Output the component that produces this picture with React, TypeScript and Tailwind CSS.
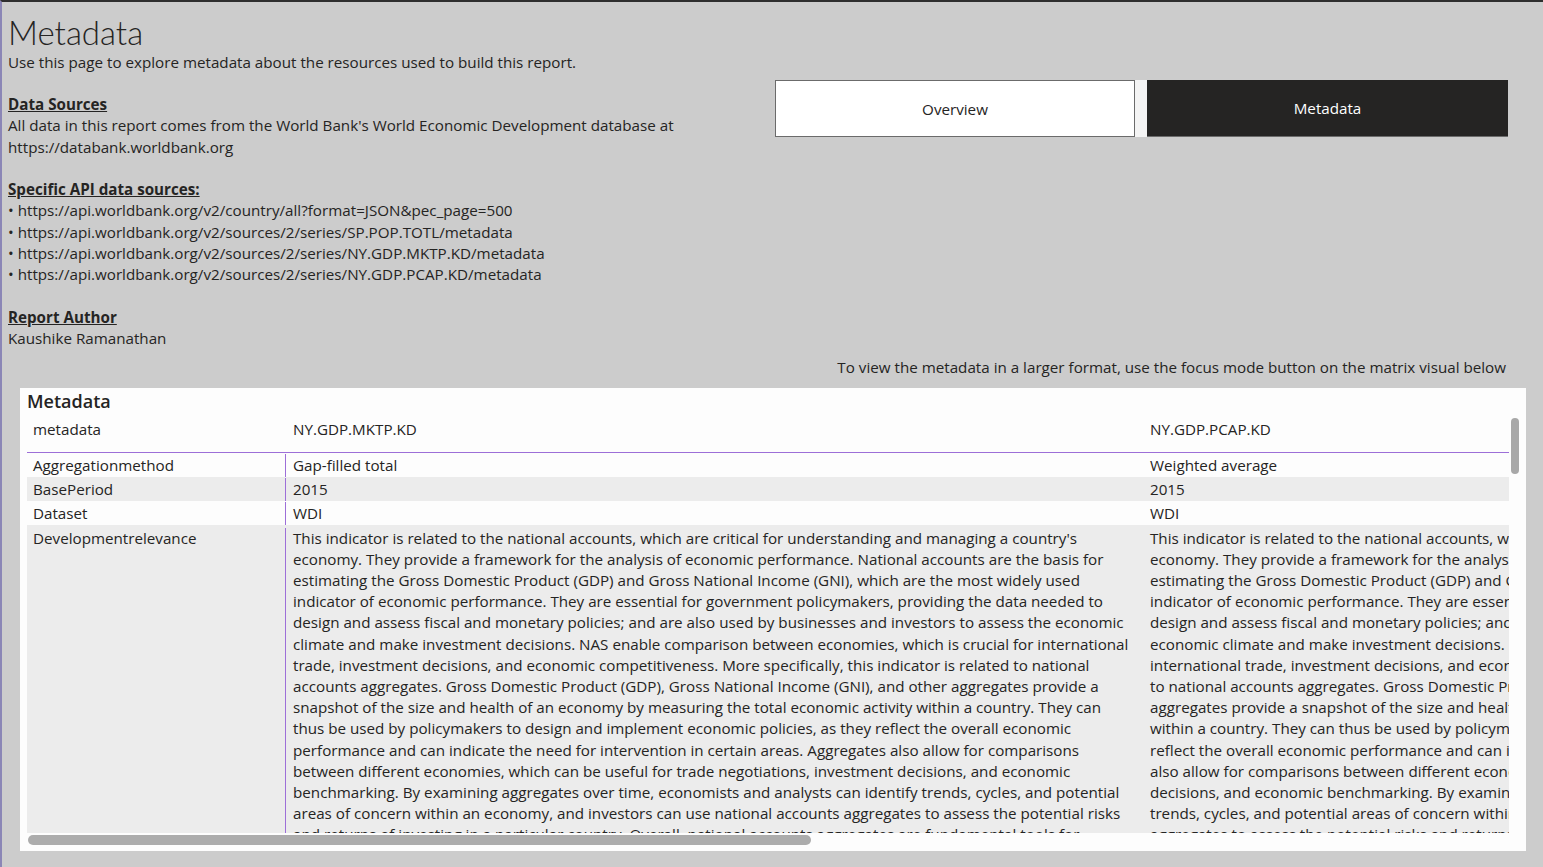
import type { ReactNode } from 'react';

const apiSources = [
  'https://api.worldbank.org/v2/country/all?format=JSON&pec_page=500',
  'https://api.worldbank.org/v2/sources/2/series/SP.POP.TOTL/metadata',
  'https://api.worldbank.org/v2/sources/2/series/NY.GDP.MKTP.KD/metadata',
  'https://api.worldbank.org/v2/sources/2/series/NY.GDP.PCAP.KD/metadata',
];

const mktpLines = [
  "This indicator is related to the national accounts, which are critical for understanding and managing a country's",
  'economy. They provide a framework for the analysis of economic performance. National accounts are the basis for',
  'estimating the Gross Domestic Product (GDP) and Gross National Income (GNI), which are the most widely used',
  'indicator of economic performance. They are essential for government policymakers, providing the data needed to',
  'design and assess fiscal and monetary policies; and are also used by businesses and investors to assess the economic',
  'climate and make investment decisions. NAS enable comparison between economies, which is crucial for international',
  'trade, investment decisions, and economic competitiveness. More specifically, this indicator is related to national',
  'accounts aggregates. Gross Domestic Product (GDP), Gross National Income (GNI), and other aggregates provide a',
  'snapshot of the size and health of an economy by measuring the total economic activity within a country. They can',
  'thus be used by policymakers to design and implement economic policies, as they reflect the overall economic',
  'performance and can indicate the need for intervention in certain areas. Aggregates also allow for comparisons',
  'between different economies, which can be useful for trade negotiations, investment decisions, and economic',
  'benchmarking. By examining aggregates over time, economists and analysts can identify trends, cycles, and potential',
  'areas of concern within an economy, and investors can use national accounts aggregates to assess the potential risks',
  'and returns of investing in a particular country. Overall, national accounts aggregates are fundamental tools for',
];

const pcapLines = [
  "This indicator is related to the national accounts, which are critical for understanding and managing a country's",
  'economy. They provide a framework for the analysis of economic performance. National accounts are the basis for',
  'estimating the Gross Domestic Product (GDP) and Gross National Income (GNI), which are the most widely used',
  'indicator of economic performance. They are essential for government policymakers, providing the data needed to',
  'design and assess fiscal and monetary policies; and are also used by businesses and investors to assess the',
  'economic climate and make investment decisions. NAS enable comparison between economies, which is crucial for',
  'international trade, investment decisions, and economic competitiveness. More specifically, this indicator is related',
  'to national accounts aggregates. Gross Domestic Product (GDP), Gross National Income (GNI), and other',
  'aggregates provide a snapshot of the size and health of an economy by measuring the total economic activity',
  'within a country. They can thus be used by policymakers to design and implement economic policies, as they',
  'reflect the overall economic performance and can indicate the need for intervention in certain areas. Aggregates',
  'also allow for comparisons between different economies, which can be useful for trade negotiations, investment',
  'decisions, and economic benchmarking. By examining aggregates over time, economists and analysts can identify',
  'trends, cycles, and potential areas of concern within an economy, and investors can use national accounts',
  'aggregates to assess the potential risks and returns of investing in a particular country.',
];

const shortRows = [
  { label: 'Aggregationmethod', mktp: 'Gap-filled total', pcap: 'Weighted average', shaded: false },
  { label: 'BasePeriod', mktp: '2015', pcap: '2015', shaded: true },
  { label: 'Dataset', mktp: 'WDI', pcap: 'WDI', shaded: false },
];

function Row({ shaded, label, mktp, pcap, tall }: { shaded: boolean; label: string; mktp: ReactNode; pcap: ReactNode; tall?: boolean }) {
  return (
    <div className={`flex w-max ${shaded ? 'bg-[#ececec]' : 'bg-[#fdfdfd]'} ${tall ? 'pt-[3px]' : 'h-[24px] items-center pt-[1px]'}`}>
      <div className="w-[259px] shrink-0 self-stretch border-r border-[#9d6fd8] pl-[6px]">{label}</div>
      <div className="w-[857px] shrink-0 whitespace-nowrap pl-[7px]">{mktp}</div>
      <div className="w-[800px] shrink-0 whitespace-nowrap pl-[7px]">{pcap}</div>
    </div>
  );
}

export default function App() {
  return (
    <div className="h-[867px] w-[1543px] overflow-hidden border-l-2 border-t-2 border-l-[#8b86b6] border-t-[#2e2e2e] bg-[#cccccc] font-['Open_Sans',sans-serif] text-[15.2px] text-[#252423]">
      <div className="flex">
        <div className="w-[773px] shrink-0 pl-[6px] pt-[10px]">
          <h1 className="font-['Lato',sans-serif] text-[33px] font-light leading-[40px]">Metadata</h1>
          <p className="leading-[21px]">Use this page to explore metadata about the resources used to build this report.</p>
          <div className="mt-[21px] leading-[21.3px]">
            <p className="font-bold underline">Data Sources</p>
            <p>All data in this report comes from the World Bank's World Economic Development database at</p>
            <p>https://databank.worldbank.org</p>
            <p className="mt-[21.3px] font-bold underline">Specific API data sources:</p>
            {apiSources.map((s) => (
              <p key={s}>• {s}</p>
            ))}
            <p className="mt-[21.3px] font-bold underline">Report Author</p>
            <p>Kaushike Ramanathan</p>
          </div>
        </div>
        <div className="mt-[78px] flex h-[57px]">
          <button className="flex w-[360px] items-center justify-center border border-[#6b6b6b] bg-white pt-[1px] text-[#252423]">
            Overview
          </button>
          <div className="w-[12px] bg-[#f4f4f4]" />
          <button className="flex w-[361px] items-center justify-center border-b border-[#6b6b6b] bg-[#252423] pt-[1px] text-white">
            Metadata
          </button>
        </div>
      </div>

      <p className="mt-[7px] pr-[37px] text-right leading-[21px]">
        To view the metadata in a larger format, use the focus mode button on the matrix visual below
      </p>

      <div className="ml-[18px] mt-[10px] h-[463px] w-[1506px] bg-[#fdfdfd] px-[7px]">
        <h2 className="h-[30px] text-[18px] font-semibold leading-[26px]">Metadata</h2>
        <div className="relative">
          <div className="h-[415px] w-[1482px] overflow-hidden">
            <div className="flex h-[35px] w-max border-b-[1.5px] border-[#9d6fd8] pt-[1px] leading-[21px]">
              <div className="w-[259px] shrink-0 pl-[6px]">metadata</div>
              <div className="w-[857px] shrink-0 pl-[7px]">NY.GDP.MKTP.KD</div>
              <div className="w-[800px] shrink-0 pl-[7px]">NY.GDP.PCAP.KD</div>
            </div>
            {shortRows.map((r) => (
              <Row key={r.label} shaded={r.shaded} label={r.label} mktp={r.mktp} pcap={r.pcap} />
            ))}
            <div className="leading-[21.2px]">
              <Row
                tall
                shaded
                label="Developmentrelevance"
                mktp={mktpLines.map((l) => (
                  <div key={l}>{l}</div>
                ))}
                pcap={pcapLines.map((l) => (
                  <div key={l}>{l}</div>
                ))}
              />
            </div>
          </div>
          <div className="absolute right-0 top-0 h-[56px] w-[8px] rounded-full bg-[#a8a8a8]" />
          <div className="ml-[1px] mt-[2px] h-[10px] w-[783px] rounded-full bg-[#acacac]" />
        </div>
      </div>
    </div>
  );
}
